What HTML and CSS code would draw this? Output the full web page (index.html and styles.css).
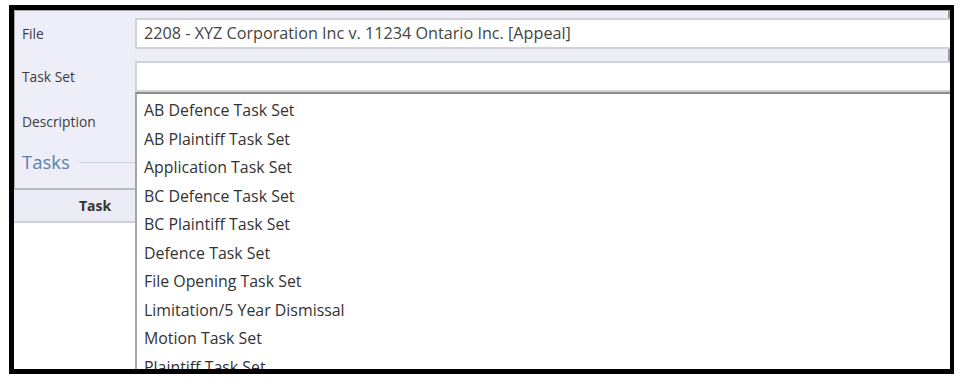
FILE: index.html
```html
<!DOCTYPE html>
<html lang="en">
<head>
  <meta charset="UTF-8">
  <meta name="viewport" content="width=device-width, initial-scale=1.0">
  <title>Task Set</title>
  <link rel="stylesheet" href="styles.css">
</head>
<body>

  <div class="window">
    <!-- Form fields -->
    <div class="field">
      <label class="field-label">File</label>
      <div class="field-input">2208 - XYZ Corporation Inc v. 11234 Ontario Inc. [Appeal]</div>
    </div>
    <div class="field">
      <label class="field-label">Task Set</label>
      <div class="field-input"></div>
    </div>
    <div class="field field-desc">
      <label class="field-label">Description</label>
    </div>

    <!-- Tasks group -->
    <div class="group">
      <span class="group-title">Tasks</span>
      <span class="group-line"></span>
    </div>

    <div class="grid">
      <div class="grid-head">
        <div class="grid-col">Task</div>
      </div>
      <div class="grid-body"></div>
    </div>

    <!-- Open dropdown -->
    <ul class="dropdown">
      <li>AB Defence Task Set</li>
      <li>AB Plaintiff Task Set</li>
      <li>Application Task Set</li>
      <li>BC Defence Task Set</li>
      <li>BC Plaintiff Task Set</li>
      <li>Defence Task Set</li>
      <li>File Opening Task Set</li>
      <li>Limitation/5 Year Dismissal</li>
      <li>Motion Task Set</li>
      <li>Plaintiff Task Set</li>
    </ul>
  </div>

</body>
</html>
```

FILE: styles.css
```css
/* General Styles */
body {
  margin: 0;
  background: #ffffff;
  font-family: "Open Sans", "Noto Sans", sans-serif;
  color: #3a3a3a;
}

/* Window frame */
.window {
  position: relative;
  box-sizing: border-box;
  width: 945px;
  height: 369px;
  margin: 5px 0 0 9px;
  border: 5px solid #000000;
  border-right-width: 4px;
  background: #eeeef8;
  box-shadow: inset -2px -2px 0 #9c9c9c, inset 1px 1px 0 #a8a8a8;
  overflow: hidden;
  padding-top: 8px;
}

/* Form rows */
.field {
  display: flex;
  align-items: center;
  height: 31px;
  margin-bottom: 12px;
}

.field-label {
  width: 113px;
  padding-left: 8px;
  font-size: 13.8px;
  color: #3c3c3c;
}

.field-input {
  flex: 1;
  box-sizing: border-box;
  height: 31px;
  margin-right: -20px;
  padding-left: 7px;
  border: 2px solid #d2d2d8;
  background: #ffffff;
  font-size: 16.2px;
  line-height: 27px;
  color: #444444;
}

.field-desc {
  height: 34px;
  margin-bottom: 0;
}

/* Tasks group */
.group {
  display: flex;
  align-items: center;
  height: 46px;
  padding-left: 8px;
}

.group-title {
  font-size: 18.5px;
  color: #5c80a6;
}

.group-line {
  flex: 1;
  height: 1px;
  margin: 2px 0 0 9px;
  background: #c9d1dd;
}

/* Tasks grid */
.grid {
  margin-top: 4px;
}

.grid-head {
  box-sizing: border-box;
  height: 35px;
  border-top: 2px solid #b9b9c0;
  border-bottom: 2px solid #cfcfd6;
  background: #ebebf5;
}

.grid-col {
  width: 162px;
  text-align: center;
  font-size: 14px;
  font-weight: bold;
  line-height: 31px;
  color: #333333;
}

.grid-body {
  height: 200px;
  background: #ffffff;
}

/* Dropdown popup */
.dropdown {
  position: absolute;
  left: 121px;
  top: 82px;
  right: -20px;
  bottom: -20px;
  margin: 0;
  padding: 2px 0 0 7px;
  list-style: none;
  background: #ffffff;
  border-top: 2px solid #8c8c8c;
  border-left: 2px solid #a4a4a4;
}

.dropdown li {
  font-size: 15.9px;
  line-height: 28.5px;
  color: #333333;
}
```
